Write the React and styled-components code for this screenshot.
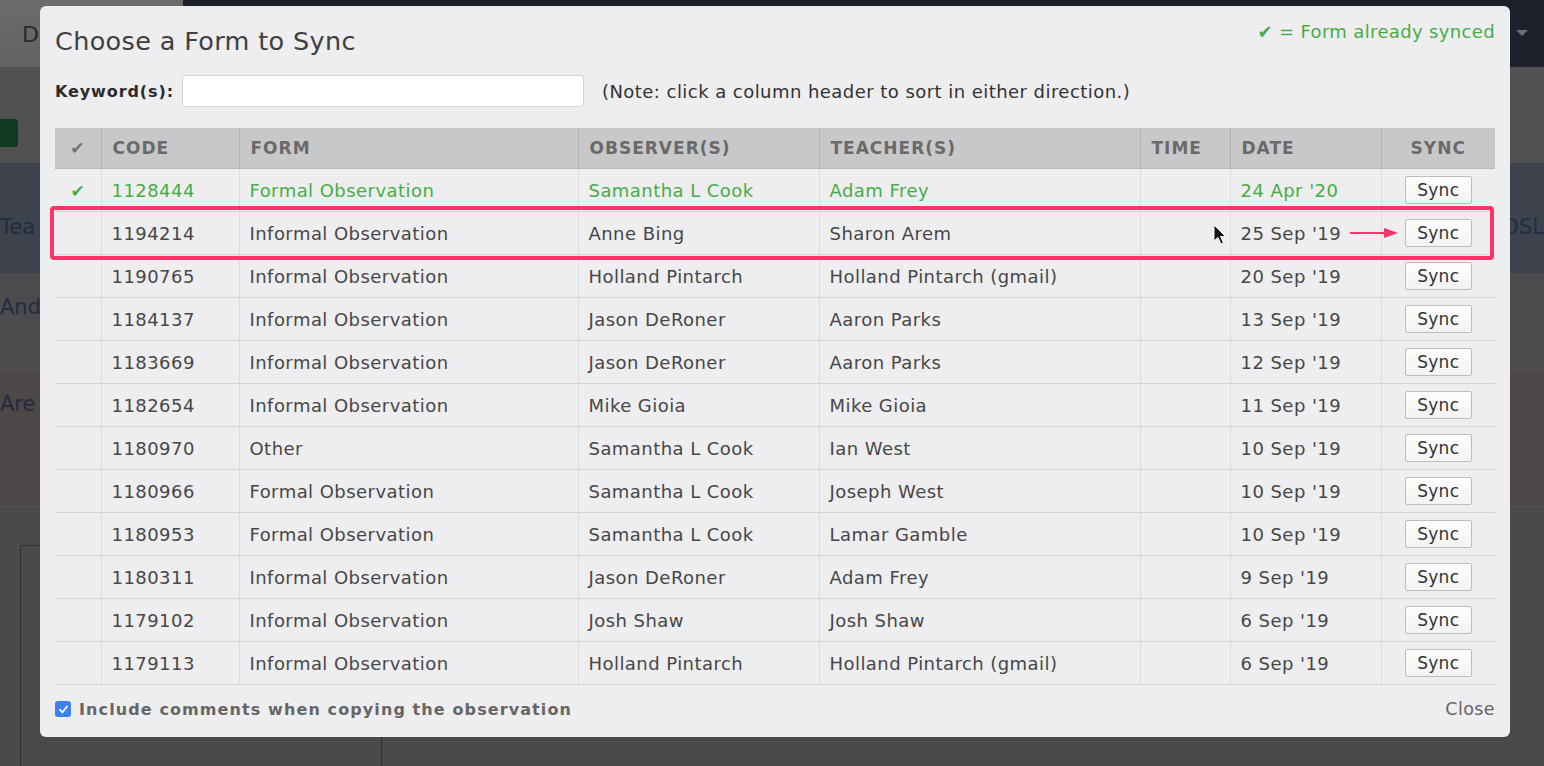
import React from "react";
import styled, { createGlobalStyle } from "styled-components";

const Global = createGlobalStyle`
  html, body { margin: 0; padding: 0; }
  body { width: 1544px; height: 766px; overflow: hidden; background: #4a4a4a; font-family: "DejaVu Sans", Verdana, sans-serif; }
`;

const Page = styled.div`
  position: relative;
  width: 1544px;
  height: 766px;
  overflow: hidden;
  display: flex;
  flex-direction: column;
  background: #4a4a4a;
`;

const TopBar = styled.div`
  height: 67px;
  display: flex;
  flex-shrink: 0;
`;

const TopLeft = styled.div`
  width: 183px;
  background: linear-gradient(#6c6c6c, #626262);
  color: #2a2a2a;
  font-size: 22px;
  padding: 22px 0 0 22px;
  box-sizing: border-box;
`;

const TopDark = styled.div`
  flex: 1;
  background: #1d212a;
  display: flex;
  justify-content: flex-end;
  align-items: center;
  padding-right: 16px;
`;

const Caret = styled.div`
  width: 0;
  height: 0;
  border-left: 6px solid transparent;
  border-right: 6px solid transparent;
  border-top: 6px solid #6c6f77;
  margin-top: -2px;
`;

const Band = styled.div`
  height: ${(p) => p.$h}px;
  flex-shrink: 0;
  background: ${(p) => p.$bg};
  display: flex;
  align-items: ${(p) => p.$align || "center"};
  justify-content: space-between;
  font-size: 21px;
  box-sizing: border-box;
  padding: ${(p) => p.$pad || "0"};
  border-bottom: ${(p) => (p.$line ? "1px solid #5a5656" : "none")};
`;

const GreenBox = styled.div`
  width: 18px;
  height: 28px;
  background: #113a22;
  border-radius: 0 3px 3px 0;
  margin-top: 52px;
`;

const BgText = styled.span`
  color: #222c40;
`;

const Outline = styled.div`
  margin: 38px 0 0 20px;
  width: 360px;
  flex: 1;
  border-left: 1px solid #2a2f3a;
  border-top: 1px solid #2a2f3a;
  border-right: 1px solid #2a2f3a;
`;

const Modal = styled.div`
  position: absolute;
  left: 40px;
  top: 6px;
  width: 1470px;
  height: 731px;
  box-sizing: border-box;
  background: #eeedf0;
  border-radius: 6px;
  padding: 16px 15px 0;
  display: flex;
  flex-direction: column;
`;

const TitleRow = styled.div`
  display: flex;
  justify-content: space-between;
  align-items: flex-start;
  height: 36px;
`;

const Title = styled.h1`
  margin: 0;
  font-weight: normal;
  font-size: 25.5px;
  line-height: 38px;
  letter-spacing: 0.35px;
  color: #404040;
`;

const Legend = styled.div`
  color: #46ad46;
  font-size: 18px;
  line-height: 20px;
  letter-spacing: 0.35px;
`;

const KeywordRow = styled.div`
  display: flex;
  align-items: center;
  height: 32px;
  margin-top: 17px;
`;

const Label = styled.label`
  font-weight: bold;
  font-size: 16px;
  letter-spacing: 0.9px;
  color: #2c2c2c;
`;

const Input = styled.input`
  width: 402px;
  height: 32px;
  box-sizing: border-box;
  margin-left: 8px;
  border: 1px solid #d4d4d6;
  border-radius: 3px;
  background: #fff;
  outline: none;
`;

const Note = styled.span`
  margin-left: 18px;
  font-size: 18px;
  letter-spacing: 0.45px;
  color: #333;
`;

const TableWrap = styled.div`
  position: relative;
  margin-top: 21px;
`;

const Table = styled.table`
  width: 1440px;
  table-layout: fixed;
  border-collapse: collapse;
`;

const Th = styled.th`
  height: 40px;
  padding: 0 0 0 ${(p) => (p.$center ? 0 : 11)}px;
  text-align: ${(p) => (p.$center ? "center" : "left")};
  background: #c8c7ca;
  color: #6a6a6a;
  font-size: 17px;
  font-weight: bold;
  letter-spacing: 1px;
  border-left: 1px solid #b3b2b5;
  border-bottom: 1px solid #b6b5b8;
  &:first-child { border-left: none; }
`;

const Tr = styled.tr`
  height: 43px;
  color: ${(p) => (p.$synced ? "#46ad46" : "#474747")};
`;

const Td = styled.td`
  padding: 0 0 0 ${(p) => (p.$center ? 0 : 10)}px;
  text-align: ${(p) => (p.$center ? "center" : "left")};
  font-size: 18px;
  letter-spacing: 0.45px;
  white-space: nowrap;
  border-left: 1px solid #dcdbde;
  border-bottom: 1px solid #d5d4d7;
  position: relative;
  &:first-child { border-left: none; }
`;

const Check = styled.span`
  color: ${(p) => p.$c};
  font-size: 17px;
`;

const SyncCell = styled.span`
  position: relative;
  display: inline-block;
  vertical-align: middle;
`;

const SyncButton = styled.button`
  width: 67px;
  height: 28px;
  box-sizing: border-box;
  border: 1px solid #bdbcbf;
  border-radius: 2px;
  background: linear-gradient(#fdfdfd, #f3f3f4);
  font-family: "DejaVu Sans", sans-serif;
  font-size: 17px;
  letter-spacing: 0.3px;
  color: #333;
  padding: 0;
  display: block;
`;

const Highlight = styled.div`
  position: absolute;
  left: -5px;
  top: 78px;
  width: 1444px;
  height: 54px;
  box-sizing: border-box;
  border: 4px solid #fd3468;
  border-radius: 4px;
  pointer-events: none;
`;

const ArrowSvg = styled.svg`
  position: absolute;
  left: -55px;
  top: 50%;
  margin-top: -7px;
`;

const Cursor = styled.svg`
  position: absolute;
  left: 72px;
  top: 12px;
`;

const Footer = styled.div`
  height: 48px;
  display: flex;
  align-items: center;
  justify-content: space-between;
`;

const CheckLabel = styled.label`
  display: flex;
  align-items: center;
  font-weight: bold;
  font-size: 16px;
  letter-spacing: 1.1px;
  color: #666;
`;

const Box = styled.span`
  width: 16px;
  height: 16px;
  border-radius: 3px;
  background: #3b82f0;
  display: inline-flex;
  align-items: center;
  justify-content: center;
  margin-right: 8px;
`;

const Close = styled.span`
  font-size: 17.5px;
  letter-spacing: 0.4px;
  color: #666;
`;

const rows = [
  ["1128444", "Formal Observation", "Samantha L Cook", "Adam Frey", "24 Apr '20", true],
  ["1194214", "Informal Observation", "Anne Bing", "Sharon Arem", "25 Sep '19"],
  ["1190765", "Informal Observation", "Holland Pintarch", "Holland Pintarch (gmail)", "20 Sep '19"],
  ["1184137", "Informal Observation", "Jason DeRoner", "Aaron Parks", "13 Sep '19"],
  ["1183669", "Informal Observation", "Jason DeRoner", "Aaron Parks", "12 Sep '19"],
  ["1182654", "Informal Observation", "Mike Gioia", "Mike Gioia", "11 Sep '19"],
  ["1180970", "Other", "Samantha L Cook", "Ian West", "10 Sep '19"],
  ["1180966", "Formal Observation", "Samantha L Cook", "Joseph West", "10 Sep '19"],
  ["1180953", "Formal Observation", "Samantha L Cook", "Lamar Gamble", "10 Sep '19"],
  ["1180311", "Informal Observation", "Jason DeRoner", "Adam Frey", "9 Sep '19"],
  ["1179102", "Informal Observation", "Josh Shaw", "Josh Shaw", "6 Sep '19"],
  ["1179113", "Informal Observation", "Holland Pintarch", "Holland Pintarch (gmail)", "6 Sep '19"],
];

const widths = [46, 138, 339, 241, 321, 90, 151, 114];

export default function App() {
  return (
    <>
      <Global />
      <Page>
        <TopBar>
          <TopLeft>D</TopLeft>
          <TopDark>
            <Caret />
          </TopDark>
        </TopBar>
        <Band $h={96} $bg="#515151" $align="flex-start">
          <GreenBox />
        </Band>
        <Band $h={110} $bg="#3e424d" $pad="52px 0 0 0" $align="flex-start">
          <BgText>Tea</BgText>
          <BgText>DSL</BgText>
        </Band>
        <Band $h={97} $bg="#4b4b4d" $align="flex-start" $pad="22px 0 0 0" $line>
          <BgText>And</BgText>
        </Band>
        <Band $h={137} $bg="#4d4747" $align="flex-start" $pad="22px 0 0 0" $line>
          <BgText>Are</BgText>
        </Band>
        <Outline />

        <Modal>
          <TitleRow>
            <Title>Choose a Form to Sync</Title>
            <Legend>✔ = Form already synced</Legend>
          </TitleRow>
          <KeywordRow>
            <Label>Keyword(s):</Label>
            <Input />
            <Note>(Note: click a column header to sort in either direction.)</Note>
          </KeywordRow>
          <TableWrap>
            <Table>
              <colgroup>
                {widths.map((w, i) => (
                  <col key={i} style={{ width: w }} />
                ))}
              </colgroup>
              <thead>
                <tr>
                  <Th $center>
                    <Check $c="#6f6f6f">✔</Check>
                  </Th>
                  <Th>CODE</Th>
                  <Th>FORM</Th>
                  <Th>OBSERVER(S)</Th>
                  <Th>TEACHER(S)</Th>
                  <Th>TIME</Th>
                  <Th>DATE</Th>
                  <Th $center>SYNC</Th>
                </tr>
              </thead>
              <tbody>
                {rows.map((r, i) => (
                  <Tr key={r[0]} $synced={r[5]}>
                    <Td $center>{r[5] && <Check $c="#46ad46">✔</Check>}</Td>
                    <Td>{r[0]}</Td>
                    <Td>{r[1]}</Td>
                    <Td>{r[2]}</Td>
                    <Td>{r[3]}</Td>
                    <Td>
                      {i === 1 && (
                        <Cursor width="14" height="22" viewBox="0 0 14 22">
                          <path d="M1 1 L1 17 L5 13.5 L8 20 L10.5 19 L7.5 12.5 L12.5 12.5 Z" fill="#111" stroke="#fff" strokeWidth="1" />
                        </Cursor>
                      )}
                    </Td>
                    <Td>{r[4]}</Td>
                    <Td $center>
                      <SyncCell>
                        {i === 1 && (
                          <ArrowSvg width="50" height="14" viewBox="0 0 50 14">
                            <line x1="0" y1="7" x2="38" y2="7" stroke="#fd3468" strokeWidth="2" />
                            <path d="M34 2 L48 7 L34 12 Z" fill="#fd3468" />
                          </ArrowSvg>
                        )}
                        <SyncButton>Sync</SyncButton>
                      </SyncCell>
                    </Td>
                  </Tr>
                ))}
              </tbody>
            </Table>
            <Highlight />
          </TableWrap>
          <Footer>
            <CheckLabel>
              <Box>
                <svg width="11" height="11" viewBox="0 0 11 11">
                  <path d="M2 5.8 L4.5 8.3 L9 2.5" fill="none" stroke="#fff" strokeWidth="1.8" strokeLinecap="round" strokeLinejoin="round" />
                </svg>
              </Box>
              Include comments when copying the observation
            </CheckLabel>
            <Close>Close</Close>
          </Footer>
        </Modal>
      </Page>
    </>
  );
}
